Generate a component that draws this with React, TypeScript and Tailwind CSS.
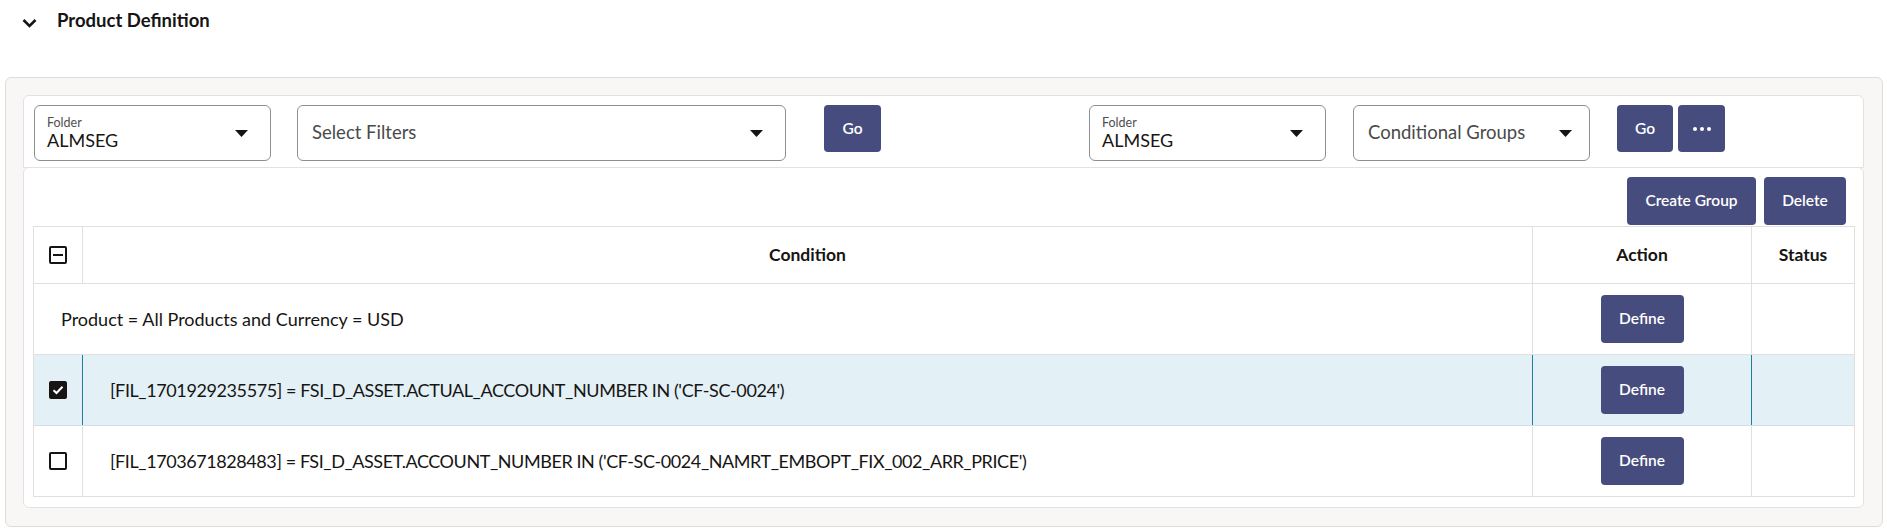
import React from "react";

const FONT = { fontFamily: "Lato, 'Noto Sans', sans-serif" };

function Caret() {
  return (
    <svg width="13" height="7" viewBox="0 0 13 7" className="shrink-0">
      <path d="M0 0 H13 L6.5 7 Z" fill="#161513" />
    </svg>
  );
}

function FolderSelect() {
  return (
    <div className="w-[237px] h-[56px] border border-[#8f8f8f] rounded-[6px] flex items-center justify-between pl-[12px] pr-[22px] bg-white">
      <div className="flex flex-col leading-none">
        <span className="text-[12.5px] text-[#4f4f4f]">Folder</span>
        <span className="text-[18px] text-[#161513] mt-[1px]">ALMSEG</span>
      </div>
      <Caret />
    </div>
  );
}

function TextSelect({ label, width, pr }: { label: string; width: string; pr: string }) {
  return (
    <div className={`${width} h-[56px] border border-[#8f8f8f] rounded-[6px] flex items-center justify-between pl-[14px] ${pr} bg-white`}>
      <span className="text-[18.5px] text-[#4a4a4a]">{label}</span>
      <Caret />
    </div>
  );
}

function CheckBox({ state }: { state: "none" | "checked" | "mixed" }) {
  if (state === "checked") {
    return (
      <div className="w-[18px] h-[18px] rounded-[2px] bg-[#161513] flex items-center justify-center">
        <svg width="12" height="10" viewBox="0 0 12 10">
          <path d="M1.5 5.2 L4.5 8 L10.5 1.8" stroke="white" strokeWidth="2" fill="none" />
        </svg>
      </div>
    );
  }
  return (
    <div className="w-[18px] h-[18px] rounded-[2px] border-2 border-[#161513] bg-white flex items-center justify-center">
      {state === "mixed" && <div className="w-[10px] h-[2px] bg-[#161513]" />}
    </div>
  );
}

function DefineBtn() {
  return (
    <button className="w-[83px] h-[48px] bg-[#474c7e] text-white rounded-[4px] font-semibold text-[15.5px]">
      Define
    </button>
  );
}

export default function App() {
  return (
    <div className="bg-white w-[1887px] h-[531px] text-[#161513]" style={FONT}>
      <div className="h-[42px] flex items-center pl-[22px]">
        <svg width="15" height="10" viewBox="0 0 15 10" className="mt-[3px]">
          <path d="M1.5 2 L7.5 8 L13.5 2" stroke="#161513" strokeWidth="2.6" fill="none" />
        </svg>
        <span className="ml-[20px] text-[18.5px] font-bold">Product Definition</span>
      </div>
      <div className="mt-[35px] ml-[5px] mr-[4px] h-[450px] bg-[#f8f7f5] border border-[#dedcd8] rounded-[6px] pt-[17px] pl-[17px] pr-[18px] pb-[18px]">
        <div className="flex flex-col h-full">
          <div className="h-[74px] bg-white border border-[#e2e2e2] rounded-t-[6px] flex items-start pt-[9px] pl-[10px]">
            <FolderSelect />
            <div className="ml-[26px]">
              <TextSelect label="Select Filters" width="w-[489px]" pr="pr-[22px]" />
            </div>
            <button className="ml-[38px] w-[57px] h-[47px] bg-[#474c7e] text-white rounded-[4px] font-semibold text-[15.5px]">
              Go
            </button>
            <div className="ml-[208px]">
              <FolderSelect />
            </div>
            <div className="ml-[27px]">
              <TextSelect label="Conditional Groups" width="w-[237px]" pr="pr-[17px]" />
            </div>
            <button className="ml-[27px] w-[56px] h-[47px] bg-[#474c7e] text-white rounded-[4px] font-semibold text-[15.5px]">
              Go
            </button>
            <button className="ml-[5px] w-[47px] h-[47px] bg-[#474c7e] text-white rounded-[4px] flex items-center justify-center gap-[3px]">
              <span className="w-[4px] h-[4px] rounded-full bg-white" />
              <span className="w-[4px] h-[4px] rounded-full bg-white" />
              <span className="w-[4px] h-[4px] rounded-full bg-white" />
            </button>
          </div>
          <div className="-mt-px flex-1 bg-white border border-[#e2e2e2] rounded-[6px] px-[9px] pt-[9px] pb-[10px] flex flex-col">
            <div className="flex justify-end gap-[8px] pr-[8px]">
              <button className="w-[129px] h-[48px] bg-[#474c7e] text-white rounded-[4px] font-semibold text-[15.5px]">
                Create Group
              </button>
              <button className="w-[82px] h-[48px] bg-[#474c7e] text-white rounded-[4px] font-semibold text-[15.5px]">
                Delete
              </button>
            </div>
            <table className="mt-px w-[1821px] border-collapse border border-[#e0e0e0] table-fixed">
              <colgroup>
                <col className="w-[49px]" />
                <col className="w-[1450px]" />
                <col className="w-[219px]" />
                <col className="w-[103px]" />
              </colgroup>
              <thead>
                <tr className="h-[57px]">
                  <th className="border border-[#e0e0e0] align-middle">
                    <div className="flex justify-center">
                      <CheckBox state="mixed" />
                    </div>
                  </th>
                  <th className="border border-[#e0e0e0] text-[17.5px] font-bold">Condition</th>
                  <th className="border border-[#e0e0e0] text-[17.5px] font-bold">Action</th>
                  <th className="border border-[#e0e0e0] text-[17.5px] font-bold">Status</th>
                </tr>
              </thead>
              <tbody>
                <tr className="h-[71px]">
                  <td colSpan={2} className="border border-[#e0e0e0] pl-[27px] text-[18px]">
                    Product = All Products and Currency = USD
                  </td>
                  <td className="border border-[#e0e0e0] text-center">
                    <DefineBtn />
                  </td>
                  <td className="border border-[#e0e0e0]" />
                </tr>
                <tr className="h-[71px] bg-[#e3f0f6]">
                  <td className="border-y border-[#d5dde2] border-r border-r-[#1d7ea0]">
                    <div className="flex justify-center">
                      <CheckBox state="checked" />
                    </div>
                  </td>
                  <td className="border-y border-[#d5dde2] border-r border-r-[#1d7ea0] pl-[27px] text-[18px] tracking-[-0.4px]">
                    [FIL_1701929235575] = FSI_D_ASSET.ACTUAL_ACCOUNT_NUMBER IN ('CF-SC-0024')
                  </td>
                  <td className="border-y border-[#d5dde2] border-r border-r-[#1d7ea0] text-center">
                    <DefineBtn />
                  </td>
                  <td className="border-y border-[#d5dde2]" />
                </tr>
                <tr className="h-[71px]">
                  <td className="border border-[#e0e0e0]">
                    <div className="flex justify-center">
                      <CheckBox state="none" />
                    </div>
                  </td>
                  <td className="border border-[#e0e0e0] pl-[27px] text-[18px] tracking-[-0.42px]">
                    [FIL_1703671828483] = FSI_D_ASSET.ACCOUNT_NUMBER IN ('CF-SC-0024_NAMRT_EMBOPT_FIX_002_ARR_PRICE')
                  </td>
                  <td className="border border-[#e0e0e0] text-center">
                    <DefineBtn />
                  </td>
                  <td className="border border-[#e0e0e0]" />
                </tr>
              </tbody>
            </table>
          </div>
        </div>
      </div>
    </div>
  );
}
